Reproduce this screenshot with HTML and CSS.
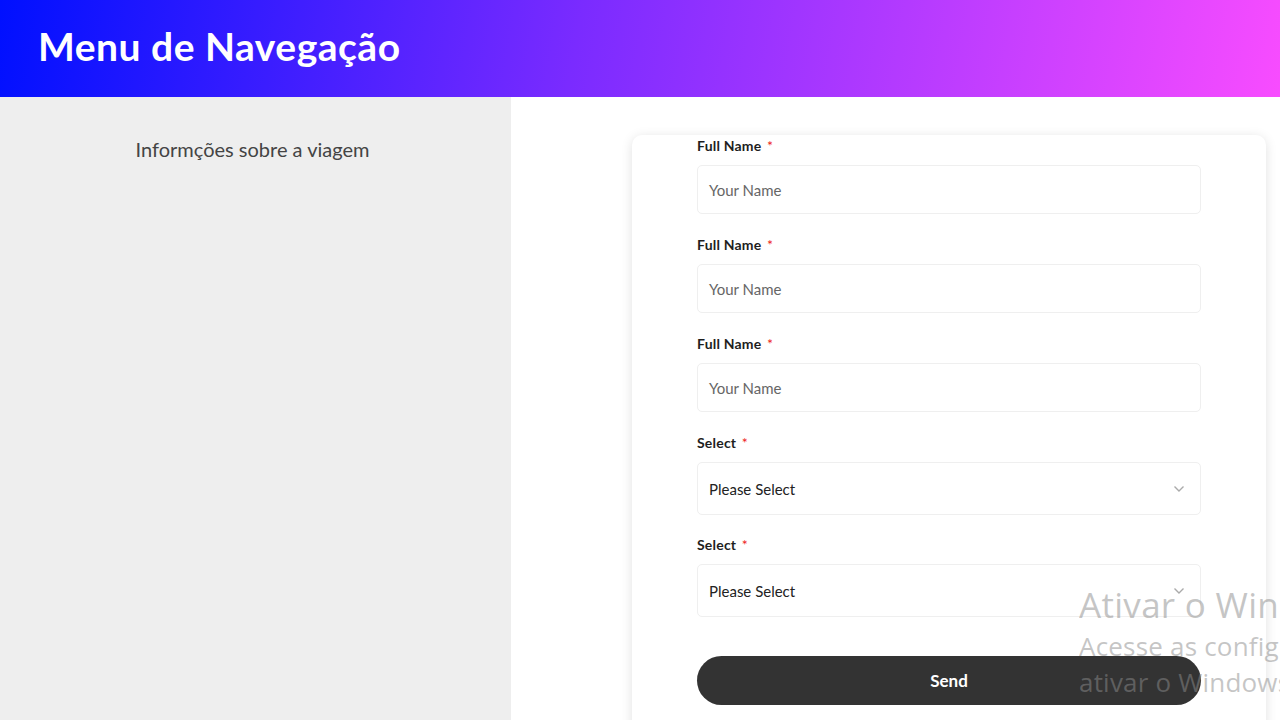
FILE: index.html
```html
<!DOCTYPE html>
<html lang="pt">
<head>
<meta charset="utf-8">
<title>Menu de Navegação</title>
<link rel="stylesheet" href="styles.css">
</head>
<body>
<header class="topbar">
  <h1 class="title">Menu de Navegação</h1>
</header>
<div class="layout">
  <aside class="sidebar">
    <p class="side-text">Informções sobre a viagem</p>
  </aside>
  <main class="main">
    <form class="card">
      <div class="field">
        <label class="label">Full Name <span class="req">*</span></label>
        <div class="input"><span class="placeholder">Your Name</span></div>
      </div>
      <div class="field">
        <label class="label">Full Name <span class="req">*</span></label>
        <div class="input"><span class="placeholder">Your Name</span></div>
      </div>
      <div class="field">
        <label class="label">Full Name <span class="req">*</span></label>
        <div class="input"><span class="placeholder">Your Name</span></div>
      </div>
      <div class="field">
        <label class="label">Select <span class="req">*</span></label>
        <div class="input select"><span class="value">Please Select</span>
          <svg class="chev" width="12" height="8" viewBox="0 0 12 8"><polyline points="1.5,1.5 6,6 10.5,1.5" fill="none" stroke="#aaa" stroke-width="1.4"/></svg>
        </div>
      </div>
      <div class="field">
        <label class="label">Select <span class="req">*</span></label>
        <div class="input select"><span class="value">Please Select</span>
          <svg class="chev" width="12" height="8" viewBox="0 0 12 8"><polyline points="1.5,1.5 6,6 10.5,1.5" fill="none" stroke="#aaa" stroke-width="1.4"/></svg>
        </div>
      </div>
      <button type="button" class="send">Send</button>
    </form>
  </main>
</div>
<div class="watermark">
  <div class="wm-title">Ativar o Windows</div>
  <div class="wm-sub">Acesse as configurações para<br>ativar o Windows.</div>
</div>
</body>
</html>
```
FILE: styles.css
```css
html, body {
  margin: 0;
  padding: 0;
  height: 720px;
  overflow: hidden;
  font-family: "Lato", "Liberation Sans", sans-serif;
  background: #fff;
}
.topbar {
  height: 97px;
  background: linear-gradient(100deg, #0010ff 0%, #7a2bff 45%, #f84cff 100%);
  display: flex;
  align-items: center;
  padding-left: 38px;
}
.title {
  margin: 0;
  color: #fff;
  font-size: 39px;
  font-weight: 700;
  letter-spacing: 0.5px;
  position: relative;
  top: -3px;
}
.layout {
  display: flex;
  height: 623px;
}
.sidebar {
  width: 511px;
  background: #eeeeee;
  flex-shrink: 0;
}
.side-text {
  margin: 40px 0 0;
  text-align: center;
  font-size: 20px;
  color: #444;
  padding-right: 6px;
}
.main {
  flex: 1;
  padding: 38px 14px 0 121px;
}
.card {
  background: #fff;
  border-radius: 10px;
  box-shadow: 0 2px 12px rgba(0, 0, 0, 0.12);
  padding: 3px 65px 40px 65px;
  width: 504px;
  margin: 0;
  display: flex;
  flex-direction: column;
}
.field {
  display: flex;
  flex-direction: column;
  gap: 11px;
  margin-bottom: 23px;
}
.label {
  font-size: 14px;
  font-weight: 700;
  color: #1e1e1e;
  line-height: 16px;
  letter-spacing: 0.2px;
}
.req {
  color: #e22;
  font-weight: 400;
  margin-left: 2px;
}
.input {
  height: 49px;
  border: 1px solid #efefef;
  border-radius: 5px;
  box-sizing: border-box;
  display: flex;
  align-items: center;
  padding: 0 12px 0 11px;
}
.placeholder {
  font-size: 15px;
  color: #666;
}
.select {
  height: 53px;
  justify-content: space-between;
}
.field:has(.select) {
  margin-bottom: 22px;
}
.value {
  font-size: 15px;
  color: #222;
}
.chev {
  margin-right: 3px;
}
.send {
  margin-top: 17px;
  height: 49px;
  border: none;
  border-radius: 25px;
  background: #333;
  color: #fff;
  font-family: "Lato", "Liberation Sans", sans-serif;
  font-size: 17px;
  font-weight: 700;
  width: 504px;
}
.watermark {
  position: absolute;
  left: 1079px;
  top: 582px;
  right: 0;
  overflow: hidden;
  color: rgba(140, 140, 140, 0.5);
  font-family: "Open Sans", "Noto Sans", sans-serif;
  white-space: nowrap;
  pointer-events: none;
}
.wm-title {
  font-size: 35px;
  line-height: 46px;
  letter-spacing: 0.3px;
}
.wm-sub {
  font-size: 26px;
  line-height: 36px;
  letter-spacing: 0.2px;
}
```
